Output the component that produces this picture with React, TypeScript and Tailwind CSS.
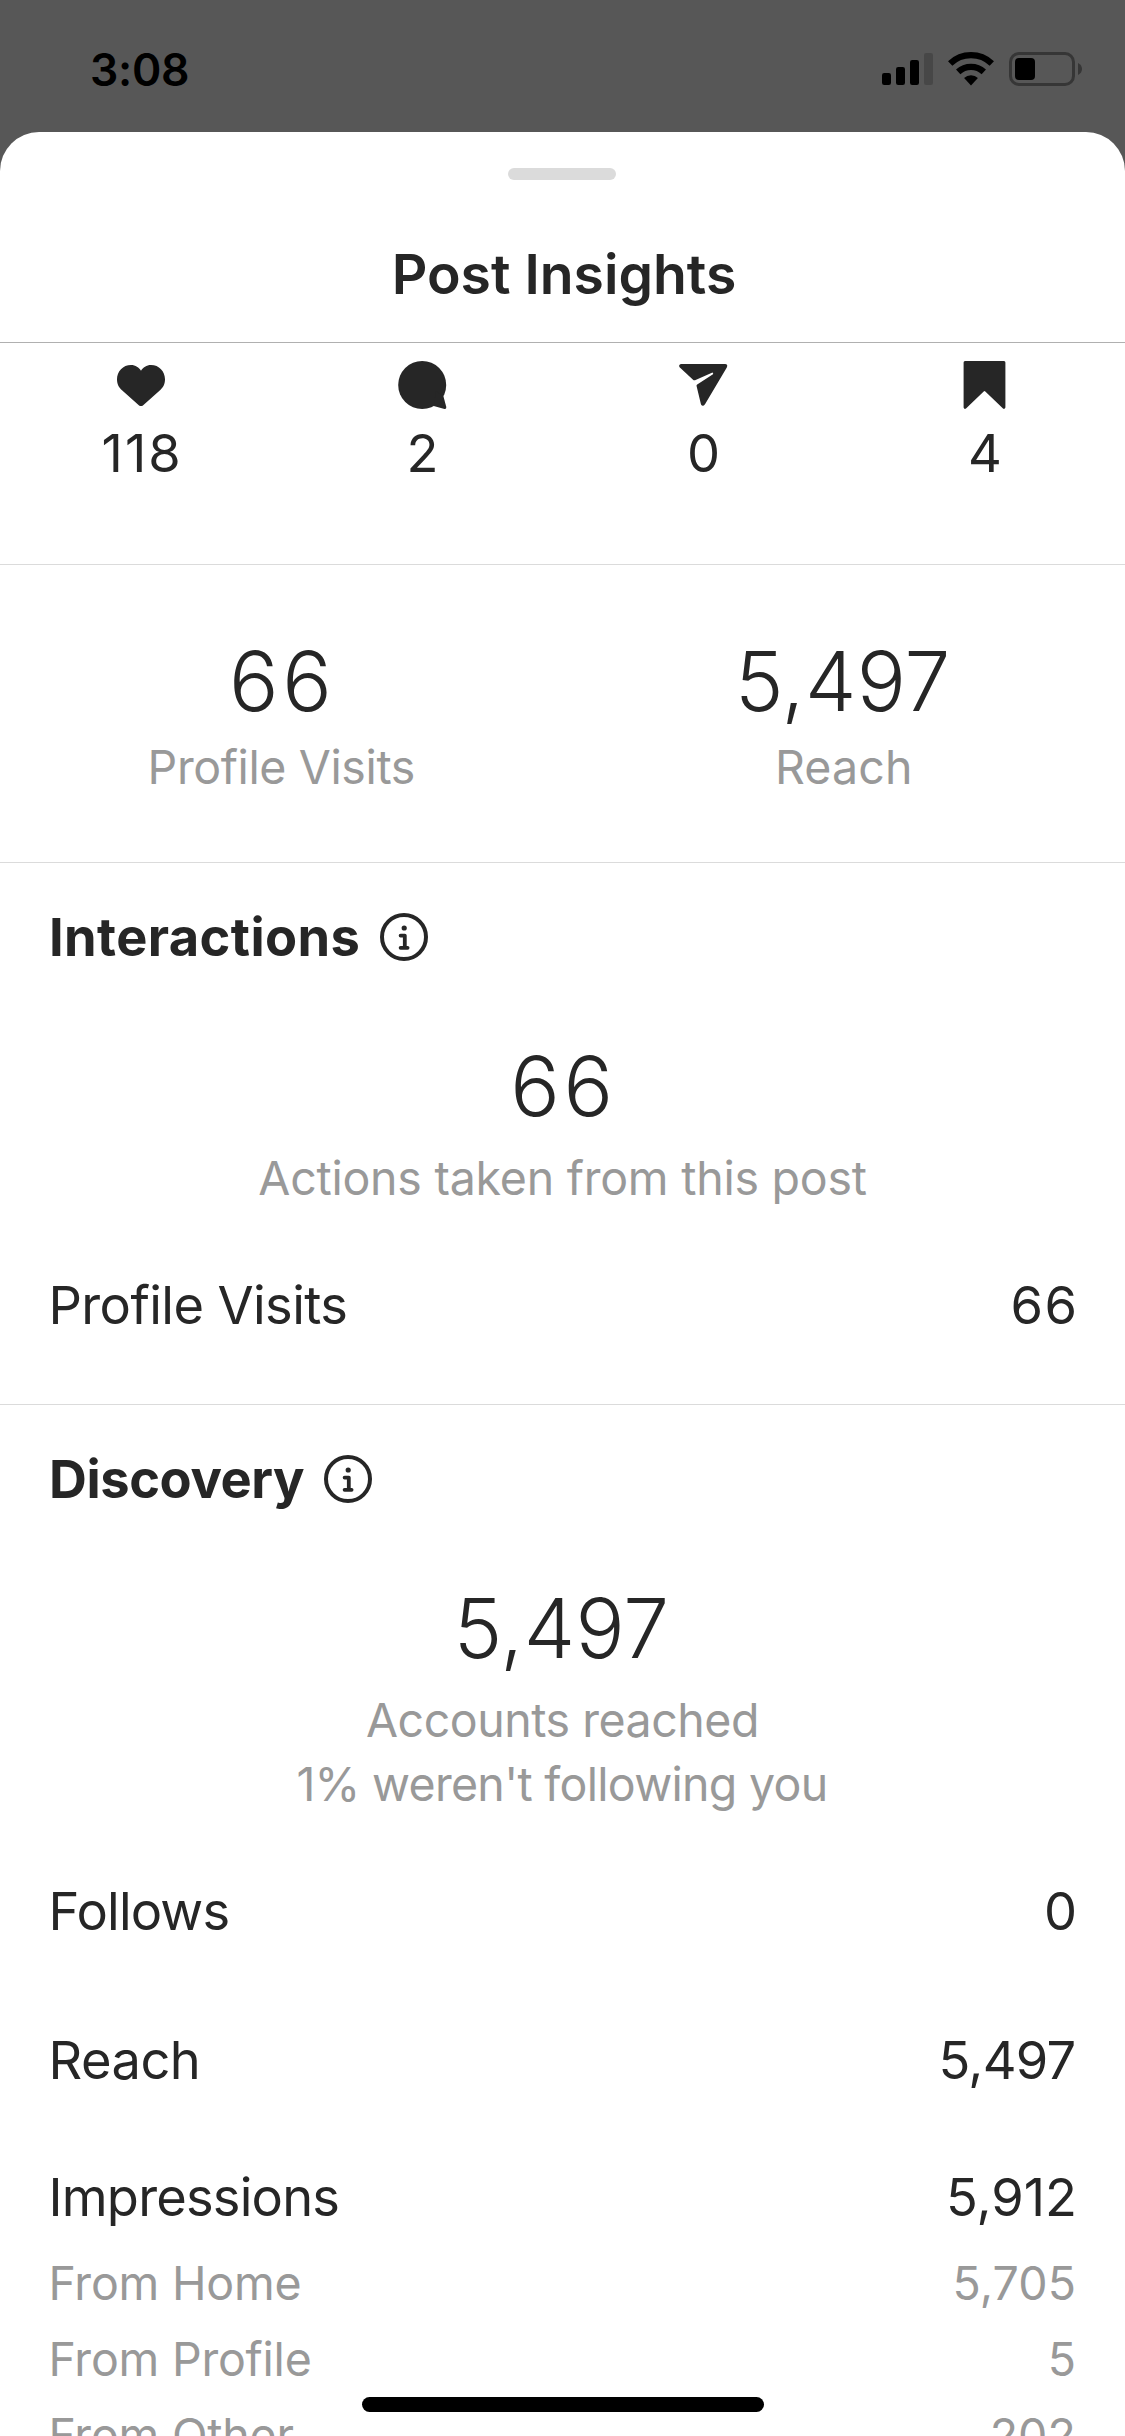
import type { ReactNode } from "react";

function StatusBar() {
  return (
    <div className="flex h-[132px] items-start justify-between pl-[90px] pr-[43px]">
      <span className="mt-[43px] text-[44.5px] font-semibold leading-[54px] tracking-[-0.3px] text-black">
        3:08
      </span>
      <div className="mt-[52px] flex items-start">
        <svg width="52" height="34" viewBox="0 0 52 34">
          <rect x="0" y="21" width="9" height="12" rx="2.2" />
          <rect x="14" y="15" width="9" height="18" rx="2.2" />
          <rect x="28" y="8" width="9" height="25" rx="2.2" />
          <rect x="42" y="1" width="9" height="32" rx="2.2" fill="#474747" />
        </svg>
        <svg className="ml-[14px]" width="46" height="34" viewBox="0 0 46 34">
          <g fill="none" stroke="#000" strokeWidth="6.3">
            <path d="M2.2 11.5A30.2 30.2 0 0 1 43.8 11.5" />
            <path d="M10.2 19.9A18.6 18.6 0 0 1 35.8 19.9" />
          </g>
          <path d="M16.1 26.1A10 10 0 0 1 29.9 26.1L23 33.4Z" />
        </svg>
        <svg className="ml-[15px]" width="73" height="34" viewBox="0 0 73 34">
          <rect x="1.5" y="1.5" width="63" height="31" rx="8.5" fill="none" stroke="#363636" strokeWidth="3" />
          <rect x="6" y="6" width="20" height="22" rx="4" />
          <path d="M69 11Q73 13.2 73 17T69 23Z" fill="#363636" />
        </svg>
      </div>
    </div>
  );
}

function Metric({ value, children }: { value: string; children: ReactNode }) {
  return (
    <div className="flex flex-1 flex-col items-center">
      <svg width="48" height="48" viewBox="0 0 48 48" className="overflow-visible" fill="#262626">
        {children}
      </svg>
      <span className="mt-3 pl-[3px] text-[52.4px] leading-[64px] tracking-[2px]">{value}</span>
    </div>
  );
}

function BigNumber({ value, wide }: { value: string; wide?: boolean }) {
  return (
    <div
      className={
        wide
          ? "pl-[2px] text-center text-[82.4px] font-light leading-[99px] tracking-[3.6px]"
          : "pr-[2px] text-center text-[81.8px] font-light leading-[99px] tracking-[0.3px]"
      }
    >
      {value}
    </div>
  );
}

function Heading({ title, className }: { title: string; className: string }) {
  return (
    <div className="flex items-center pl-[49px]">
      <h2 className={`text-[52.4px] font-bold leading-[64px] ${className}`}>{title}</h2>
      <svg className="ml-[19.5px]" width="48" height="48" viewBox="0 0 48 48" fill="none" stroke="#262626">
        <circle cx="24" cy="24" r="22" strokeWidth="4" />
        <circle cx="24.2" cy="15" r="2.6" fill="#262626" stroke="none" />
        <path d="M20.6 22.6H24.8V34.8M20.6 34.8H27.6" strokeWidth="3.8" strokeLinecap="round" strokeLinejoin="round" />
      </svg>
    </div>
  );
}

function Row({
  label,
  value,
  className = "",
  labelClass = "",
  valueClass = "",
}: {
  label: string;
  value: string;
  className?: string;
  labelClass?: string;
  valueClass?: string;
}) {
  return (
    <div className={`flex justify-between pl-[48.5px] pr-12 text-[52.4px] leading-[64px] ${className}`}>
      <span className={labelClass}>{label}</span>
      <span className={valueClass}>{value}</span>
    </div>
  );
}

function SubRow({ label, value }: { label: string; value: string }) {
  return (
    <div className="flex justify-between pl-[48.5px] pr-[49px] text-[46.5px] leading-[76px] tracking-[-0.22px] text-[#999]">
      <span>{label}</span>
      <span className="tracking-[0.1px]">{value}</span>
    </div>
  );
}

export default function App() {
  return (
    <div className="relative h-[2436px] w-[1125px] overflow-hidden bg-[#575757] font-['Inter',sans-serif] text-[#262626]">
      <StatusBar />
      <div className="h-[2304px] overflow-hidden rounded-t-[39px] bg-white">
        <header className="h-[211px] border-b border-[#b0b0b0] pt-9">
          <div className="ml-[508px] h-3 w-[108px] rounded-full bg-[#dbdbdb]" />
          <h1 className="mt-[60px] pl-[3px] text-center text-[55.3px] font-semibold leading-[67px] tracking-[0px]">
            Post Insights
          </h1>
        </header>

        <section className="flex h-[222px] border-b border-[#dbdbdb] pt-[18px]">
          <Metric value="118">
            <path d="M24 9.7C22 6.5 18.5 4 14 4 6 4 0 10.3 0 18.3 0 23.5 2 26.5 5 29.3L21.8 44.2C23.2 45.4 24.8 45.4 26.2 44.2L43 29.3C46 26.5 48 23.5 48 18.3 48 10.3 42 4 34 4 29.5 4 26 6.5 24 9.7Z" />
          </Metric>
          <Metric value="2">
            <circle cx="24.2" cy="24" r="24" />
            <path d="M45.4 35.3L48.3 46Q48.5 48.3 46.5 48L35.7 45 38 30Z" />
          </Metric>
          <Metric value="0">
            <path d="M2 3H46Q49.3 3.4 47.8 6.5L26 43.3Q23.8 46.2 22 43.5L17.5 24.8Q17.6 24 18.2 23.6L34 13.2Q34.6 12.2 33.5 11.4L16 19.2Q15 19.6 14.3 19L.6 6.3Q-.8 3.8 2 3Z" />
          </Metric>
          <Metric value="4">
            <path d="M5 0H44Q45.4 0 45.4 1.5V46.5Q44.6 48.6 43 47.6L25.3 30.4Q24.5 29.8 23.7 30.4L6 47.6Q4.2 48.6 3.6 46.5V1.5Q3.6 0 5 0Z" />
          </Metric>
        </section>

        <section className="grid h-[298px] grid-cols-2 border-b border-[#dbdbdb] pt-[67px]">
          <div className="text-center">
            <BigNumber value="66" wide />
            <p className="mt-1 text-[46.5px] leading-[64px] tracking-[-0.38px] text-[#999]">Profile Visits</p>
          </div>
          <div className="text-center">
            <BigNumber value="5,497" />
            <p className="mt-1 text-[46.5px] leading-[64px] tracking-[0.1px] text-[#999]">Reach</p>
          </div>
        </section>

        <section className="h-[542px] border-b border-[#dbdbdb] pt-[42px]">
          <Heading title="Interactions" className="tracking-[0.39px]" />
          <div className="mt-[68px]">
            <BigNumber value="66" wide />
          </div>
          <p className="mt-2.5 text-center text-[46.5px] leading-[64px] tracking-[-0.24px] text-[#999]">
            Actions taken from this post
          </p>
          <Row
            label="Profile Visits"
            value="66"
            className="mt-[63px]"
            labelClass="tracking-[-0.6px]"
            valueClass="tracking-[1.5px] -mr-[1.5px]"
          />
        </section>

        <section className="pt-[42px]">
          <Heading title="Discovery" className="tracking-[-0.4px]" />
          <div className="mt-[68px]">
            <BigNumber value="5,497" />
          </div>
          <div className="mt-2.5 text-center text-[46.5px] leading-[64px] text-[#999]">
            <p className="tracking-[-0.47px]">Accounts reached</p>
            <p className="pr-px tracking-[-0.69px]">1% weren't following you</p>
          </div>
          <Row label="Follows" value="0" className="mt-[63px]" labelClass="tracking-[-0.85px]" />
          <Row
            label="Reach"
            value="5,497"
            className="mt-[85px]"
            labelClass="tracking-[-0.5px]"
            valueClass="mr-[1.5px] tracking-[-0.7px]"
          />
          <Row label="Impressions" value="5,912" className="mt-[73px]" labelClass="tracking-[-0.8px]" />
          <div className="mt-4">
            <SubRow label="From Home" value="5,705" />
            <SubRow label="From Profile" value="5" />
            <SubRow label="From Other" value="202" />
          </div>
        </section>
      </div>
      <div className="absolute bottom-6 left-[362px] h-[15px] w-[402px] rounded-full bg-black" />
    </div>
  );
}
